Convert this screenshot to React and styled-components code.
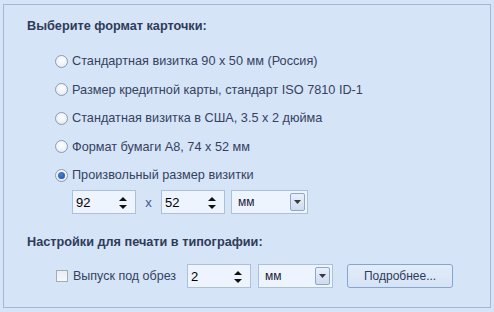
import React from "react";
import styled, { createGlobalStyle } from "styled-components";

const Global = createGlobalStyle`
  html, body { margin: 0; padding: 0; background: #d6e4f8; }
  body { font-family: "Liberation Sans", Arial, sans-serif; }
`;

const Page = styled.div`
  width: 494px;
  height: 312px;
  box-sizing: border-box;
  padding: 4px 3px 4px 3px;
  background: #d6e4f8;
`;

const Panel = styled.div`
  box-sizing: border-box;
  width: 488px;
  height: 304px;
  border: 1px solid #a3b7d6;
  padding: 13px 0 0 23px;
  display: flex;
  flex-direction: column;
`;

const Heading = styled.div`
  font-size: 12.7px;
  font-weight: bold;
  color: #2e3c58;
  line-height: 16px;
  height: 16px;
  margin-top: ${(p) => p.$mt || 0}px;
`;

const RadioList = styled.div`
  margin-top: 17px;
  margin-left: 28px;
  display: flex;
  flex-direction: column;
  gap: 8.5px;
`;

const OptionRow = styled.label`
  display: flex;
  align-items: center;
  height: 20px;
  gap: 4px;
  font-size: 12.7px;
  color: #34425e;
`;

const RadioDot = styled.span`
  box-sizing: border-box;
  width: 13px;
  height: 13px;
  border-radius: 50%;
  border: 1px solid #8a9cb6;
  background: radial-gradient(circle at 50% 40%, #ffffff 0%, #eef2f7 55%, #d5dde8 100%);
  display: flex;
  align-items: center;
  justify-content: center;
  &::after {
    content: "";
    width: 7px;
    height: 7px;
    border-radius: 50%;
    background: ${(p) => (p.$on ? "radial-gradient(circle at 40% 35%, #4a7fd0, #1d4f9e)" : "transparent")};
  }
`;

const Row = styled.div`
  display: flex;
  align-items: center;
  margin-top: ${(p) => p.$mt}px;
  margin-left: ${(p) => p.$ml}px;
  height: 24px;
`;

const SpinBox = styled.div`
  box-sizing: border-box;
  width: 64px;
  height: 24px;
  border: 1px solid #aebfd8;
  background: #eef4fd;
  display: flex;
  align-items: center;
  padding-left: 3px;
  font-size: 13px;
  color: #000;
  position: relative;
`;

const SpinArrows = styled.svg`
  position: absolute;
  right: 7px;
  top: 5px;
`;

const Times = styled.span`
  width: 25px;
  text-align: center;
  font-size: 13px;
  color: #3a5a8c;
`;

const Combo = styled.div`
  box-sizing: border-box;
  width: ${(p) => p.$w}px;
  height: 24px;
  margin-left: ${(p) => p.$ml}px;
  border: 1px solid #aebfd8;
  background: #eef4fd;
  display: flex;
  align-items: center;
  justify-content: space-between;
  padding: 0 2px 0 6px;
  font-size: 12px;
  color: #1a1a40;
`;

const DropBtn = styled.div`
  box-sizing: border-box;
  width: 15px;
  height: 18px;
  border: 1px solid #8ea6c8;
  border-radius: 2px;
  background: linear-gradient(#e8f0fb, #cfdcee);
  display: flex;
  align-items: center;
  justify-content: center;
`;

const CheckLabel = styled.label`
  display: flex;
  align-items: center;
  gap: 5px;
  margin-left: 29px;
  font-size: 12.5px;
  color: #34425e;
`;

const CheckBox = styled.span`
  box-sizing: border-box;
  width: 12px;
  height: 12px;
  border: 1px solid #a2abb8;
  background: linear-gradient(#e9edf2, #f6f8fa);
`;

const Button = styled.div`
  box-sizing: border-box;
  width: 106px;
  height: 24px;
  margin-left: 14px;
  border: 1px solid #87a4cf;
  border-radius: 3px;
  background: linear-gradient(#e3edfa, #d6e3f6);
  display: flex;
  align-items: center;
  justify-content: center;
  font-size: 12px;
  color: #2e3c58;
`;

const Spin = ({ value, ml }) => (
  <SpinBox style={ml ? { marginLeft: ml } : undefined}>
    {value}
    <SpinArrows width="10" height="14" viewBox="0 0 10 14">
      <path d="M5 1 L9 5 L1 5 Z" fill="#111" />
      <path d="M5 13 L9 9 L1 9 Z" fill="#111" />
    </SpinArrows>
  </SpinBox>
);

const Arrow = () => (
  <svg width="7" height="4" viewBox="0 0 7 4">
    <path d="M0 0 L7 0 L3.5 4 Z" fill="#3a3a3a" />
  </svg>
);

const options = [
  "Стандартная визитка 90 x 50 мм (Россия)",
  "Размер кредитной карты, стандарт ISO 7810 ID-1",
  "Стандатная визитка в США, 3.5 x 2 дюйма",
  "Формат бумаги A8, 74 x 52 мм",
  "Произвольный размер визитки",
];

export default function App() {
  return (
    <Page>
      <Global />
      <Panel>
        <Heading>Выберите формат карточки:</Heading>
        <RadioList>
          {options.map((o, i) => (
            <OptionRow key={i}>
              <RadioDot $on={i === 4} />
              {o}
            </OptionRow>
          ))}
        </RadioList>
        <Row $mt={5} $ml={45}>
          <Spin value="92" />
          <Times>x</Times>
          <Spin value="52" />
          <Combo $w={77} $ml={6}>
            мм
            <DropBtn>
              <Arrow />
            </DropBtn>
          </Combo>
        </Row>
        <Heading $mt={20}>Настройки для печати в типографии:</Heading>
        <Row $mt={14} $ml={0}>
          <CheckLabel>
            <CheckBox />
            Выпуск под обрез
          </CheckLabel>
          <Spin value="2" ml={11} />
          <Combo $w={75} $ml={7}>
            мм
            <DropBtn>
              <Arrow />
            </DropBtn>
          </Combo>
          <Button>Подробнее...</Button>
        </Row>
      </Panel>
    </Page>
  );
}
